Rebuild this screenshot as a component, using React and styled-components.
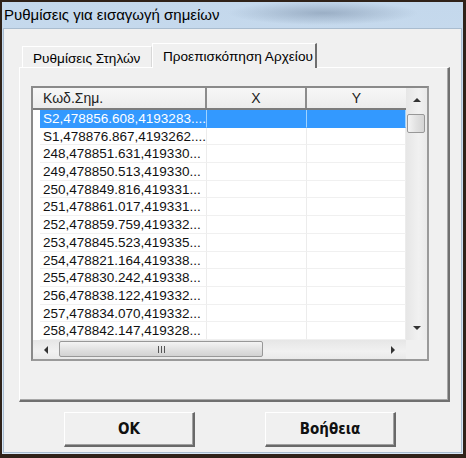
import { createGlobalStyle } from "styled-components";
import styled from "styled-components";

const GlobalStyle = createGlobalStyle`
  html, body {
    margin: 0;
    padding: 0;
    background: #2f2219;
  }
  * {
    box-sizing: border-box;
  }
`;

const ROWS = [
  "S2,478856.608,4193283....",
  "S1,478876.867,4193262....",
  "248,478851.631,419330...",
  "249,478850.513,419330...",
  "250,478849.816,419331...",
  "251,478861.017,419331...",
  "252,478859.759,419332...",
  "253,478845.523,419335...",
  "254,478821.164,419338...",
  "255,478830.242,419338...",
  "256,478838.122,419332...",
  "257,478834.070,419332...",
  "258,478842.147,419328...",
];

//---> window frame <---
const Window = styled.div`
  width: 466px;
  height: 458px;
  padding: 2px 3px 4px 2px;
  background: #2f2219;
  display: flex;
`;

const Frame = styled.div`
  flex: 1;
  display: flex;
  flex-direction: column;
  padding: 0 1px 1px 1px;
  background: linear-gradient(180deg, #c4d8ec 0%, #cfe1f2 60%, #d8e7f5 100%);
`;

const TitleBar = styled.div`
  height: 26px;
  display: flex;
  align-items: center;
  padding-left: 1px;
  padding-bottom: 2px;
  font-family: "Liberation Sans", Arial, sans-serif;
  font-size: 15px;
  color: #000;
  background: radial-gradient(
    ellipse 95px 12px at 320px 11px,
    rgba(120, 140, 165, 0.55),
    rgba(120, 140, 165, 0) 100%
  );
`;

const Client = styled.div`
  flex: 1;
  display: flex;
  flex-direction: column;
  padding: 14px 11px 5px 15px;
  background: #f0f0f0;
  border: 1px solid #a9bccf;
`;

//---> tabs <---
const TabStrip = styled.div`
  height: 24px;
  display: flex;
  align-items: flex-end;
  padding-left: 3px;
  position: relative;
  z-index: 1;
`;

const Tab = styled.div`
  height: ${({ active }) => (active ? "25px" : "21px")};
  width: ${({ width }) => width + "px"};
  margin-bottom: ${({ active }) => (active ? "-1px" : "0")};
  padding: ${({ active }) => (active ? "5px 0 0 10px" : "4px 0 0 10px")};
  background: #f0f0f0;
  border-top: 1px solid #fff;
  border-left: 1px solid #fff;
  border-right: ${({ active }) => (active ? "2px solid #6e6e6e" : "1px solid #d8d8d8")};
  font-family: "Liberation Sans", Arial, sans-serif;
  font-size: 13.6px;
  color: #000;
  white-space: nowrap;
`;

const Panel = styled.div`
  height: 335px;
  padding: 18px 0 0 11px;
  border-top: 1px solid #fff;
  border-left: 1px solid #fff;
  border-right: 2px solid #707070;
  border-bottom: 2px solid #707070;
  box-shadow: inset -1px -1px 0 #a8a8a8;
`;

//---> list view <---
const List = styled.div`
  width: 398px;
  height: 275px;
  border: 2px solid #8a8a8a;
  border-right-color: #9a9a9a;
  border-bottom-color: #9a9a9a;
  background: #fff;
  display: grid;
  grid-template-columns: 1fr 21px;
  grid-template-rows: 22px 1fr 19px;
  overflow: hidden;
`;

const Table = styled.div`
  grid-column: 1;
  grid-row: 1 / 3;
  display: flex;
  flex-direction: column;
  overflow: hidden;
`;

const HeaderRow = styled.div`
  height: 22px;
  flex: none;
  display: grid;
  grid-template-columns: 174px 100px 1fr;
  background: linear-gradient(180deg, #f7f7f7, #ececec);
  border-bottom: 2px solid #7c7c7c;
`;

const HeaderCell = styled.div`
  display: flex;
  align-items: center;
  justify-content: ${({ center }) => (center ? "center" : "flex-start")};
  padding-left: ${({ center }) => (center ? "0" : "10px")};
  border-right: ${({ last }) => (last ? "none" : "2px solid #8c8c8c")};
  font-family: "Liberation Sans", Arial, sans-serif;
  font-size: 14px;
  color: #222;
`;

const Row = styled.div`
  height: 17.7px;
  flex: none;
  display: grid;
  grid-template-columns: 174px 100px 1fr;
  font-family: "Liberation Sans", Arial, sans-serif;
  font-size: 13.5px;
  line-height: 17.7px;
`;

const Cell = styled.div`
  margin-left: ${({ first }) => (first ? "7px" : "0")};
  padding-left: ${({ first }) => (first ? "3px" : "0")};
  background: ${({ selected }) => (selected ? "#3399ff" : "#fff")};
  color: ${({ selected }) => (selected ? "#fff" : "#111")};
  border-right: 1px solid ${({ selected }) => (selected ? "#9fd3ff" : "#ececec")};
  border-bottom: 1px solid ${({ selected }) => (selected ? "#3399ff" : "#f0f0f0")};
  white-space: nowrap;
  overflow: hidden;
`;

//---> scrollbars <---
const VScroll = styled.div`
  grid-column: 2;
  grid-row: 1 / 3;
  display: flex;
  flex-direction: column;
  background: linear-gradient(90deg, #e6e6e6, #f1f1f1 60%, #e9e9e9);
`;

const HScroll = styled.div`
  grid-column: 1;
  grid-row: 3;
  display: flex;
  align-items: center;
  background: linear-gradient(180deg, #e6e6e6, #f1f1f1 60%, #e9e9e9);
`;

const Corner = styled.div`
  grid-column: 2;
  grid-row: 3;
  background: #f0f0f0;
`;

const ArrowBox = styled.div`
  width: ${({ w }) => w + "px"};
  height: ${({ h }) => h + "px"};
  flex: none;
  display: flex;
  align-items: center;
  justify-content: center;
`;

const Arrow = styled.div`
  width: 0;
  height: 0;
  border-style: solid;
  border-color: transparent;
  ${({ dir }) =>
    dir === "up"
      ? "border-width: 0 4px 4px 4px; border-bottom-color: #333;"
      : dir === "down"
      ? "border-width: 4px 4px 0 4px; border-top-color: #333;"
      : dir === "left"
      ? "border-width: 4px 4px 4px 0; border-right-color: #333;"
      : "border-width: 4px 0 4px 4px; border-left-color: #333;"}
`;

const VSpace = styled.div`
  flex: 1;
  padding: 2px 2px 0 1px;
`;

const VThumb = styled.div`
  height: 19px;
  border: 1px solid #989898;
  border-radius: 2px;
  background: linear-gradient(90deg, #f4f4f4, #e2e2e2 50%, #d4d4d4);
`;

const HTrack = styled.div`
  flex: 1;
  height: 100%;
  padding: 1px 0 2px 0;
`;

const HThumb = styled.div`
  width: 204px;
  height: 100%;
  border: 1px solid #989898;
  border-radius: 2px;
  background: linear-gradient(180deg, #f4f4f4, #e2e2e2 50%, #d2d2d2);
  display: flex;
  align-items: center;
  justify-content: center;
  gap: 2px;
`;

const Grip = styled.span`
  width: 1px;
  height: 7px;
  background: #555;
`;

//---> buttons <---
const ButtonRow = styled.div`
  margin-top: 10px;
  display: flex;
  gap: 70px;
  padding-left: 45px;
`;

const Button = styled.div`
  width: ${({ width }) => width + "px"};
  height: 35px;
  display: flex;
  align-items: center;
  justify-content: center;
  background: #f0f0f0;
  border-top: 1px solid #fff;
  border-left: 1px solid #fff;
  border-right: 2px solid #696969;
  border-bottom: 2px solid #696969;
  box-shadow: inset -1px -1px 0 #a0a0a0;
  font-family: "DejaVu Sans Condensed", "DejaVu Sans", sans-serif;
  font-stretch: condensed;
  font-weight: bold;
  font-size: 15px;
  color: #111;
`;

const App = () => {
  return (
    <>
      <GlobalStyle />
      <Window>
        <Frame>
          <TitleBar>Ρυθμίσεις για εισαγωγή σημείων</TitleBar>
          <Client>
            <TabStrip>
              <Tab width={130}>Ρυθμίσεις Στηλών</Tab>
              <Tab width={165} active>
                Προεπισκόπηση Αρχείου
              </Tab>
            </TabStrip>
            <Panel>
              <List>
                <Table>
                  <HeaderRow>
                    <HeaderCell>Κωδ.Σημ.</HeaderCell>
                    <HeaderCell center>X</HeaderCell>
                    <HeaderCell center last>
                      Y
                    </HeaderCell>
                  </HeaderRow>
                  {ROWS.map((text, indx) => (
                    <Row key={indx}>
                      <Cell first selected={indx === 0}>
                        {text}
                      </Cell>
                      <Cell selected={indx === 0} />
                      <Cell selected={indx === 0} />
                    </Row>
                  ))}
                </Table>
                <VScroll>
                  <ArrowBox w={21} h={24}>
                    <Arrow dir="up" />
                  </ArrowBox>
                  <VSpace>
                    <VThumb />
                  </VSpace>
                  <ArrowBox w={21} h={24}>
                    <Arrow dir="down" />
                  </ArrowBox>
                </VScroll>
                <HScroll>
                  <ArrowBox w={26} h={19}>
                    <Arrow dir="left" />
                  </ArrowBox>
                  <HTrack>
                    <HThumb>
                      <Grip />
                      <Grip />
                      <Grip />
                    </HThumb>
                  </HTrack>
                  <ArrowBox w={26} h={19}>
                    <Arrow dir="right" />
                  </ArrowBox>
                </HScroll>
                <Corner />
              </List>
            </Panel>
            <ButtonRow>
              <Button width={131}>OK</Button>
              <Button width={131}>Βοήθεια</Button>
            </ButtonRow>
          </Client>
        </Frame>
      </Window>
    </>
  );
};

export default App;
